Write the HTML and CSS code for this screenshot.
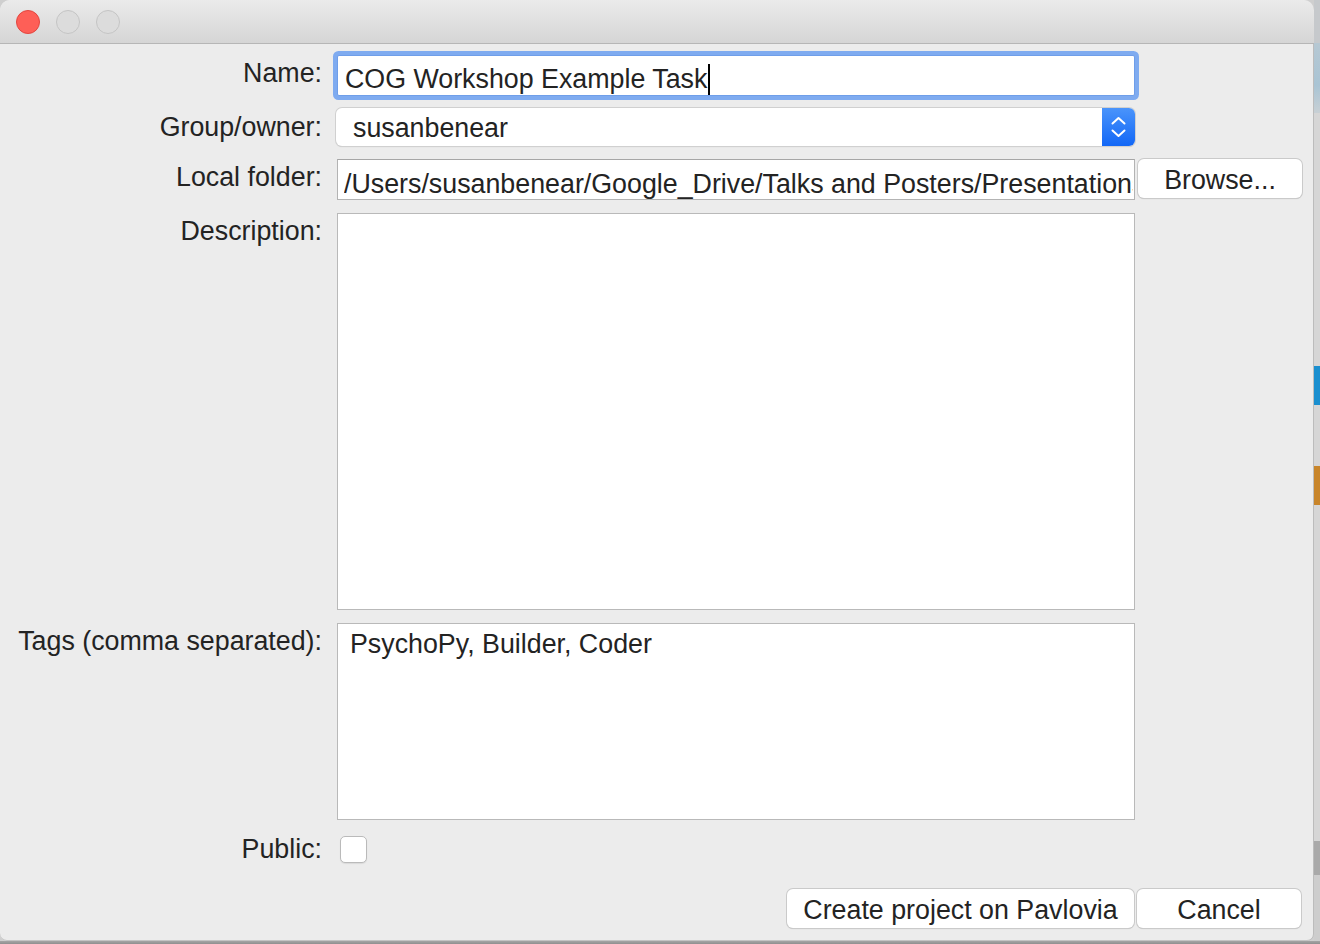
FILE: index.html
```html
<!DOCTYPE html>
<html>
<head>
<meta charset="utf-8">
<title>Create project on Pavlovia</title>
<link rel="stylesheet" href="styles.css">
</head>
<body>
<div class="screen">
  <div class="window">
    <div class="titlebar">
      <span class="light red"></span>
      <span class="light"></span>
      <span class="light"></span>
    </div>
    <div class="form">
      <div class="row row-name">
        <label class="label">Name:</label>
        <div class="field input focused">COG Workshop Example Task<span class="caret"></span></div>
      </div>
      <div class="row row-group">
        <label class="label">Group/owner:</label>
        <div class="field select">
          <span class="select-text">susanbenear</span>
          <span class="stepper">
            <svg width="33" height="38" viewBox="0 0 33 38"><path d="M10.5 15.5 L16.5 10 L22.5 15.5 M10.5 22.5 L16.5 28 L22.5 22.5" fill="none" stroke="#fff" stroke-width="2" stroke-linecap="round" stroke-linejoin="round"/></svg>
          </span>
        </div>
      </div>
      <div class="row row-folder">
        <label class="label">Local folder:</label>
        <div class="field input plain"><span class="path">/Users/susanbenear/Google_Drive/Talks and Posters/Presentations</span></div>
        <button class="btn side-btn">Browse...</button>
      </div>
      <div class="row row-desc">
        <label class="label">Description:</label>
        <div class="field area desc"></div>
      </div>
      <div class="row row-tags">
        <label class="label">Tags (comma separated):</label>
        <div class="field area tags">PsychoPy, Builder, Coder</div>
      </div>
      <div class="row row-public">
        <label class="label">Public:</label>
        <span class="checkbox"></span>
      </div>
      <div class="actions">
        <button class="btn create-btn">Create project on Pavlovia</button>
        <button class="btn side-btn cancel-btn">Cancel</button>
      </div>
    </div>
  </div>
  <div class="desk">
    <div class="seg s-top"></div>
    <div class="seg s-blue-soft"></div>
    <div class="seg s-gray1"></div>
    <div class="seg s-blue"></div>
    <div class="seg s-gray2"></div>
    <div class="seg s-orange"></div>
    <div class="seg s-gray3"></div>
    <div class="seg s-dark"></div>
    <div class="seg s-gray4"></div>
  </div>
</div>
<div class="bottom-strip"></div>
</body>
</html>
```
FILE: styles.css
```css
html, body {
  margin: 0;
  padding: 0;
}
body {
  width: 1320px;
  height: 944px;
  overflow: hidden;
  background: #cfcfcf;
  font-family: "Liberation Sans", Arial, sans-serif;
  font-size: 26.8px;
  color: #232323;
}
.screen {
  display: flex;
  height: 941px;
}
.window {
  width: 1314px;
  height: 941px;
  flex: none;
  background: #ececec;
  border-radius: 10px 10px 7px 7px;
  overflow: hidden;
  box-shadow: inset -1px 0 0 #bcbcbc, inset 0 -1px 0 #c4c4c4;
  display: flex;
  flex-direction: column;
}
.titlebar {
  height: 43px;
  flex: none;
  background: linear-gradient(#ebebeb, #d5d5d5);
  border-bottom: 1px solid #b6b6b6;
  display: flex;
  align-items: center;
  padding-left: 16px;
  gap: 16px;
}
.light {
  width: 22px;
  height: 22px;
  border-radius: 50%;
  background: #dcdcdc;
  border: 1px solid #c4c4c4;
  margin-top: 1px;
}
.light.red {
  background: #fe5f57;
  border-color: #e2463f;
}
.form {
  display: flex;
  flex-direction: column;
}
.row {
  display: flex;
  align-items: flex-start;
}
.label {
  width: 322px;
  flex: none;
  text-align: right;
  line-height: 30px;
  white-space: nowrap;
}
.field {
  margin-left: 15px;
  width: 798px;
  box-sizing: border-box;
  background: #fff;
  flex: none;
  line-height: 30px;
  white-space: nowrap;
  overflow: hidden;
}
.row-name { margin-top: 11px; }
.row-name .label { margin-top: 3px; }
.input.focused {
  height: 41px;
  border: 1px solid #6f9ee9;
  border-radius: 2px;
  box-shadow: 0 0 0 4px #7fabf0;
  padding: 8px 0 0 7px;
  overflow: visible;
}
.caret {
  display: inline-block;
  width: 2px;
  height: 31px;
  background: #000;
  vertical-align: -7px;
  margin-left: 1px;
}
.row-group { margin-top: 12px; }
.row-group .label { margin-top: 4px; }
.select {
  margin-left: 14px;
  width: 799px;
  height: 38px;
  border-radius: 6px;
  box-shadow: 0 0 0 1px #d0d0d0, 0 1px 1px rgba(0,0,0,0.18);
  display: flex;
  align-items: flex-start;
  justify-content: space-between;
}
.select-text {
  padding: 5px 0 0 17px;
}
.stepper {
  width: 33px;
  height: 38px;
  background: linear-gradient(#4a94fb, #1267f6);
  display: flex;
}
.row-folder { margin-top: 13px; }
.row-folder .label { margin-top: 3px; }
.input.plain {
  height: 41px;
  border: 1px solid #b3b3b3;
  border-top-color: #a6a6a6;
  padding: 9px 0 0 6px;
}
.path {
  display: block;
  width: 789px;
  overflow: hidden;
  text-overflow: clip;
}
.btn {
  font-family: "Liberation Sans", Arial, sans-serif;
  font-size: 26.8px;
  color: #232323;
  background: #fff;
  border: none;
  border-radius: 6px;
  box-shadow: 0 0 0 1px #cacaca, 0 1px 1px rgba(0,0,0,0.2);
  height: 39px;
  line-height: 30px;
  padding: 2px 0 0;
  margin: 0;
  box-sizing: border-box;
  flex: none;
}
.side-btn {
  width: 164px;
  margin-left: 3px;
}
.row-desc { margin-top: 13px; }
.row-desc .label { margin-top: 3px; }
.area {
  border: 1px solid #b9b9b9;
}
.desc { height: 397px; }
.row-tags { margin-top: 13px; }
.row-tags .label { margin-top: 3px; }
.tags {
  height: 197px;
  padding: 5px 0 0 12px;
}
.row-public { margin-top: 14px; align-items: center; }
.checkbox {
  margin-left: 18px;
  width: 27px;
  height: 27px;
  box-sizing: border-box;
  background: #fff;
  border: 1px solid #bababa;
  border-radius: 5px;
  box-shadow: 0 1px 1px rgba(0,0,0,0.08);
}
.actions {
  display: flex;
  justify-content: flex-start;
  margin-top: 25px;
  padding-left: 787px;
}
.create-btn {
  width: 347px;
}
.desk {
  width: 6px;
  flex: none;
  display: flex;
  flex-direction: column;
}
.seg { flex: none; }
.s-top { height: 43px; background: #c6c9cc; }
.s-blue-soft { height: 70px; background: linear-gradient(#b6c8d3, #a9c4d4 60%, #c8d0d5); }
.s-gray1 { height: 253px; background: #d6d6d6; }
.s-blue { height: 39px; background: #1a8fcf; }
.s-gray2 { height: 61px; background: #d6d6d6; }
.s-orange { height: 39px; background: #c8852a; }
.s-gray3 { height: 336px; background: #d6d6d6; }
.s-dark { height: 34px; background: #a9a9a9; }
.s-gray4 { height: 66px; background: #cdcdcd; }
.bottom-strip {
  height: 3px;
  background: linear-gradient(#a5a5a5, #8f8f8f);
}
```
